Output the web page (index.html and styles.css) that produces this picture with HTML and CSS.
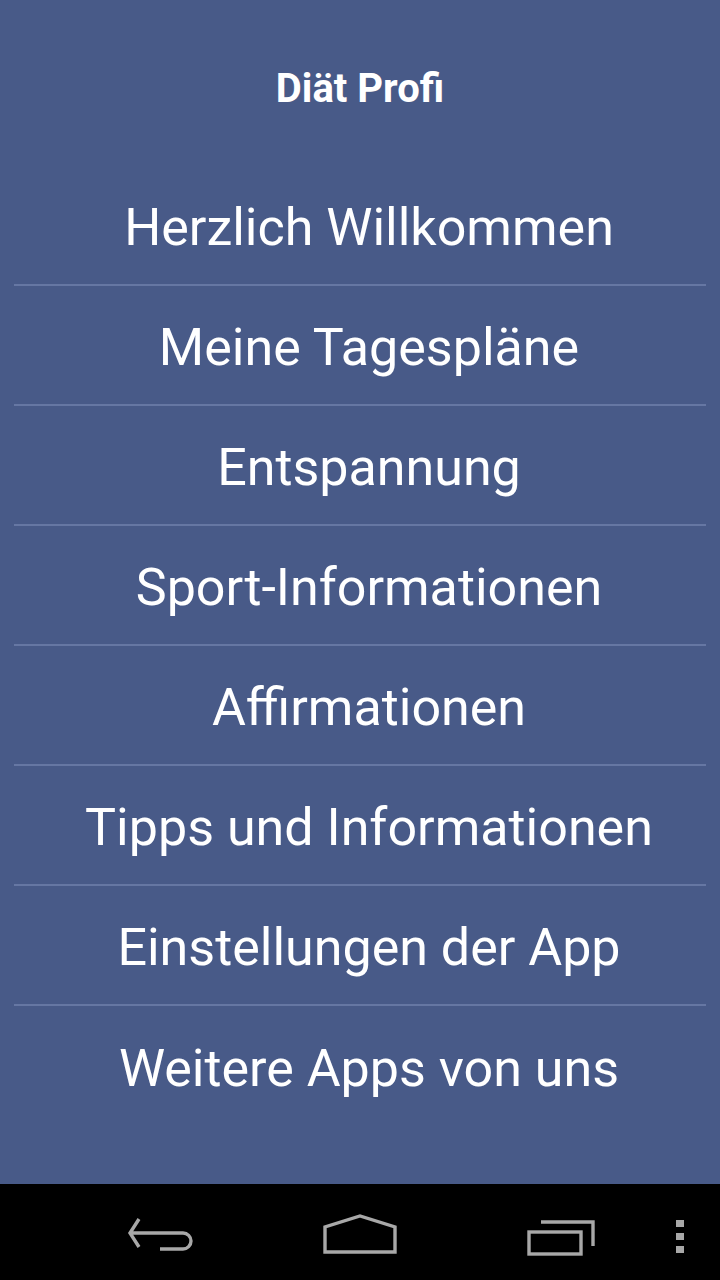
FILE: index.html
```html
<!DOCTYPE html>
<html lang="de">
<head>
  <meta charset="UTF-8">
  <meta name="viewport" content="width=device-width, initial-scale=1.0">
  <title>Diät Profi</title>
  <link rel="stylesheet" href="styles.css">
</head>
<body>
<div class="screen">
  <h1 class="title">Diät Profi</h1>

  <ul class="menu">
    <li>Herzlich Willkommen</li>
    <li>Meine Tagespläne</li>
    <li>Entspannung</li>
    <li>Sport-Informationen</li>
    <li>Affirmationen</li>
    <li>Tipps und Informationen</li>
    <li>Einstellungen der App</li>
    <li>Weitere Apps von uns</li>
  </ul>
</div>

<div class="navbar">
  <!-- zurück -->
  <svg class="nav-back" width="68" height="40" viewBox="0 0 68 40">
    <path d="M13 3 L4 17 L13 31 M4 17 H57 A8 8 0 0 1 57 33 H34" fill="none" stroke="#a8a8a8" stroke-width="3.4"/>
  </svg>
  <!-- home -->
  <svg class="nav-home" width="74" height="40" viewBox="0 0 74 40">
    <path d="M2 38 V13 L37 2 L72 13 V38 Z" fill="none" stroke="#a8a8a8" stroke-width="3.4"/>
  </svg>
  <!-- zuletzt -->
  <svg class="nav-recent" width="70" height="40" viewBox="0 0 70 40">
    <rect x="2" y="14" width="52" height="22" fill="none" stroke="#a8a8a8" stroke-width="3.4"/>
    <path d="M14 4 H66 V28" fill="none" stroke="#a8a8a8" stroke-width="3.4"/>
  </svg>
  <div class="nav-dots">
    <span></span><span></span><span></span>
  </div>
</div>
</body>
</html>
```

FILE: styles.css
```css
html, body {
  margin: 0;
  padding: 0;
}
body {
  width: 720px;
  height: 1280px;
  display: flex;
  flex-direction: column;
  background-color: #485a88;
  font-family: Roboto, "Noto Sans", sans-serif;
  color: #ffffff;
}
.screen {
  flex: 1;
}
.title {
  margin: 0;
  height: 166px;
  padding-top: 67px;
  box-sizing: border-box;
  text-align: center;
  font-size: 40px;
  font-weight: bold;
  line-height: 44px;
}
.menu {
  list-style: none;
  margin: 0 14px;
  padding: 0;
}
.menu li {
  height: 120px;
  box-sizing: border-box;
  display: flex;
  align-items: center;
  justify-content: center;
  font-size: 52px;
  padding-top: 4px;
  padding-left: 18px;
  border-bottom: 2px solid #6677a3;
}
.menu li:last-child {
  border-bottom: none;
}
.navbar {
  height: 96px;
  background-color: #000000;
  position: relative;
}
.navbar svg,
.nav-dots {
  position: absolute;
}
.nav-back {
  left: 126px;
  top: 32px;
}
.nav-home {
  left: 323px;
  top: 30px;
}
.nav-recent {
  left: 527px;
  top: 34px;
}
.nav-dots {
  left: 676px;
  top: 36px;
  display: flex;
  flex-direction: column;
  gap: 6px;
}
.nav-dots span {
  width: 8px;
  height: 7px;
  background-color: #a8a8a8;
}
```
